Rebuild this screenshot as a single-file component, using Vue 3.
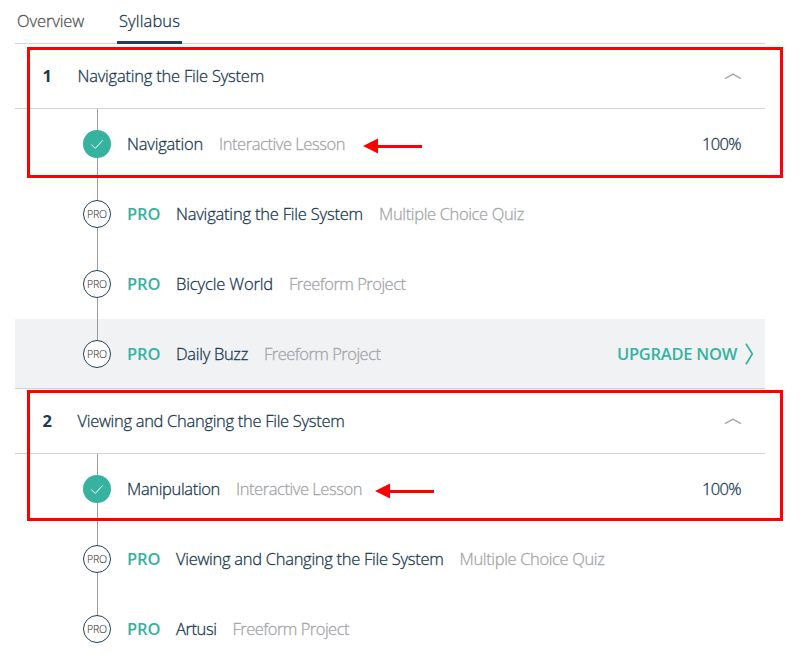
<script setup>
const tabs = [
  { label: 'Overview', width: 67, active: false },
  { label: 'Syllabus', width: 61, active: true },
]

const sections = [
  {
    number: 1,
    title: 'Navigating the File System',
    width: 186.5,
    items: [
      { title: 'Navigation', width: 76, kind: 'Interactive Lesson', kindWidth: 126, done: true },
      { title: 'Navigating the File System', width: 187, kind: 'Multiple Choice Quiz', kindWidth: 145 },
      { title: 'Bicycle World', width: 97, kind: 'Freeform Project', kindWidth: 116.5 },
      { title: 'Daily Buzz', width: 72, kind: 'Freeform Project', kindWidth: 116.5, upgrade: true },
    ],
  },
  {
    number: 2,
    title: 'Viewing and Changing the File System',
    width: 267,
    items: [
      { title: 'Manipulation', width: 93, kind: 'Interactive Lesson', kindWidth: 126, done: true },
      { title: 'Viewing and Changing the File System', width: 267.5, kind: 'Multiple Choice Quiz', kindWidth: 145 },
      { title: 'Artusi', width: 40.5, kind: 'Freeform Project', kindWidth: 116.5 },
    ],
  },
]

// Tracks a label's letters so that it fills the given width.
const vFit = {
  mounted(el, { value }) {
    const natural = el.getBoundingClientRect().width
    el.style.letterSpacing = `${(value - natural) / el.textContent.length}px`
  },
}
</script>

<template>
  <main class="page">
    <nav class="tabs">
      <a v-for="tab in tabs" :key="tab.label" class="tab" :class="{ active: tab.active }">
        <span v-fit="tab.width" class="text">{{ tab.label }}</span>
      </a>
    </nav>

    <section v-for="section in sections" :key="section.number" class="section">
      <header class="heading">
        <span class="number">{{ section.number }}</span>
        <span v-fit="section.width" class="text">{{ section.title }}</span>
        <svg class="chevron" width="18" height="8" viewBox="0 0 18 8">
          <path d="M1 6.700 9 2l8 4.700" />
        </svg>
      </header>

      <ul class="items">
        <li v-for="item in section.items" :key="item.title" class="item" :class="{ highlighted: item.upgrade }">
          <span v-if="item.done" class="marker done">
            <svg width="28" height="28" viewBox="0 0 28 28"><path d="m8.300 14.500 4 3.800 7.500-8" /></svg>
          </span>
          <span v-else class="marker"><span v-fit="20" class="text">PRO</span></span>
          <span v-if="!item.done" v-fit="33.5" class="text pro">PRO</span>
          <span v-fit="item.width" class="text title">{{ item.title }}</span>
          <span v-fit="item.kindWidth" class="text kind">{{ item.kind }}</span>
          <svg v-if="item.done" class="arrow" width="59" height="16" viewBox="0 0 59 16">
            <path d="M0 8 15 .5v15zM14 7h45v3H14z" />
          </svg>
          <span v-if="item.done" class="percent"><span v-fit="39" class="text">100%</span></span>
          <a v-if="item.upgrade" class="upgrade">
            <span v-fit="120" class="text">UPGRADE NOW</span>
            <svg width="9" height="22" viewBox="0 0 9 22"><path d="M1 .8 7.300 11 1 21.200" /></svg>
          </a>
        </li>
      </ul>
      <div class="frame"></div>
    </section>
  </main>
</template>

<style>
body {
  background: #fff;
}
</style>

<style scoped>
.page {
  box-sizing: border-box;
  height: 659px;
  overflow: hidden;
  padding: 0 39px 0 15px;
  font: 300 16.5px/24px "Open Sans", "Noto Sans", sans-serif;
  color: #1b3a51;
  -webkit-text-stroke: 0.3px currentColor;
}
.text {
  display: inline-block;
  flex: none;
  white-space: nowrap;
}
.tabs {
  display: flex;
  gap: 33px;
  box-sizing: border-box;
  height: 44px;
  padding-left: 2px;
  border-bottom: 1px solid #d2d2d2;
}
.tab {
  box-sizing: border-box;
  height: 44px;
  padding-top: 9px;
  color: #555;
}
.tab.active {
  padding: 9px 2px 0;
  border-bottom: 3px solid #204056;
  color: #1b3a51;
}
.section {
  position: relative;
}
.heading {
  display: flex;
  align-items: center;
  box-sizing: border-box;
  height: 65px;
  padding: 0 23px 0 27.5px;
  border-bottom: 1px solid #d2d2d2;
}
.number {
  width: 35px;
  font-weight: 700;
  -webkit-text-stroke: 0;
}
.chevron {
  margin-left: auto;
}
.chevron path {
  fill: none;
  stroke: #aaa;
  stroke-width: 1.5;
}
.items {
  margin: 0;
  padding: 0;
  list-style: none;
}
.item {
  position: relative;
  display: flex;
  align-items: center;
  box-sizing: border-box;
  height: 70px;
  padding: 0 24px 0 68px;
}
.item::before {
  content: "";
  position: absolute;
  left: 82px;
  top: 0;
  width: 1px;
  height: 70px;
  background: #9b9b9b;
}
.item:last-child::before {
  height: 35px;
}
.item.highlighted {
  padding-right: 11px;
  background: #f0f2f4;
  box-shadow: inset 0 -1px #d2d2d2;
}
.marker {
  position: relative;
  display: flex;
  flex: none;
  align-items: center;
  justify-content: center;
  box-sizing: border-box;
  width: 28px;
  height: 28px;
  margin-right: 16px;
  border: 1px solid #204056;
  border-radius: 50%;
  background: #fff;
  font-size: 10.5px;
  line-height: 14px;
  color: #333;
  -webkit-text-stroke: 0.1px currentColor;
}
.marker.done {
  border: 0;
  background: #35b39f;
}
.marker path {
  fill: none;
  stroke: #fff;
  stroke-width: 1;
}
.pro {
  margin-right: 15.5px;
  font-weight: 600;
  color: #35b39f;
  -webkit-text-stroke: 0;
}
.title {
  margin-right: 16px;
}
.kind {
  color: #a4a5a8;
}
.arrow {
  margin: 4px 0 0 18px;
  fill: #f00;
}
.section + .section .arrow {
  margin-left: 13px;
}
.percent {
  margin-left: auto;
}
.upgrade {
  display: flex;
  align-items: center;
  gap: 8px;
  margin-left: auto;
  font-weight: 600;
  color: #35b39f;
  -webkit-text-stroke: 0;
}
.upgrade path {
  fill: none;
  stroke: currentColor;
  stroke-width: 1.7;
}
.frame {
  position: absolute;
  top: 3px;
  left: 12px;
  box-sizing: border-box;
  width: 756px;
  height: 131px;
  border: 3px solid #f00;
  pointer-events: none;
}
.section + .section .frame {
  top: 1px;
}
</style>
